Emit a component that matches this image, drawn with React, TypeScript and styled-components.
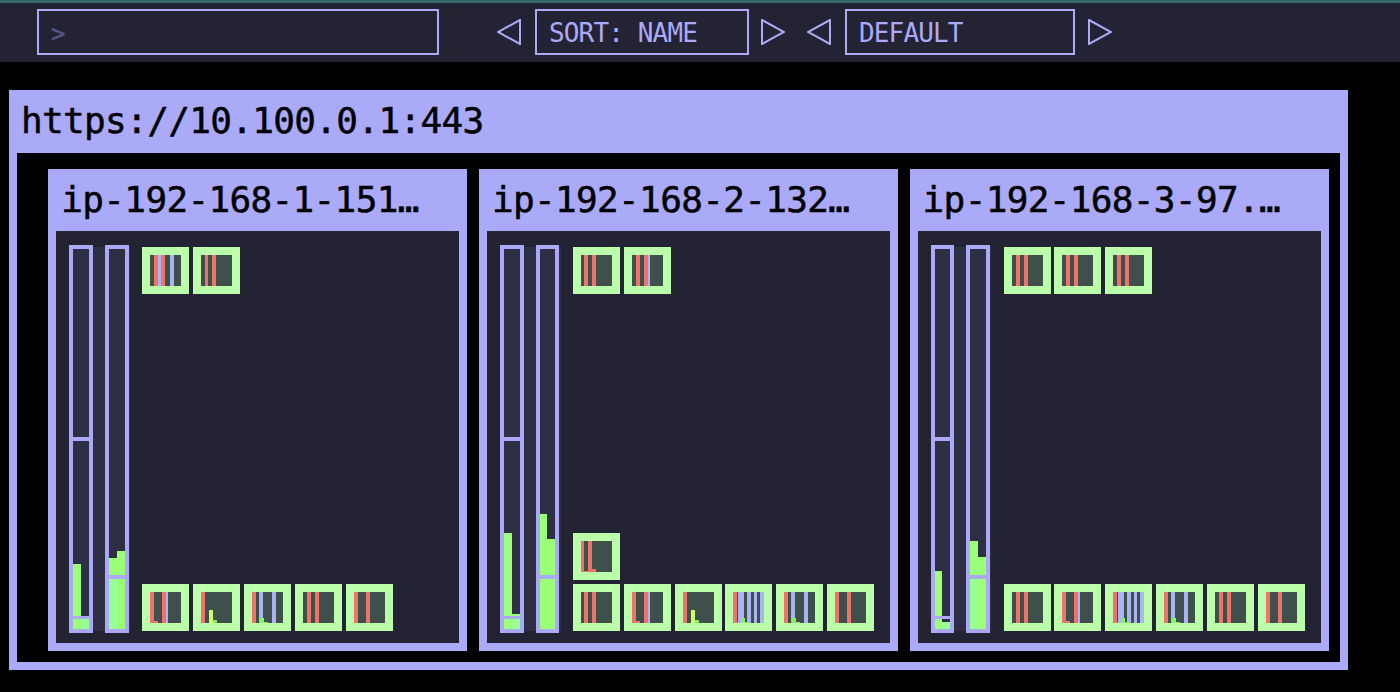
import React from "react";
import styled, { createGlobalStyle } from "styled-components";

const PRIMARY = "#aaaaf9";
const DARK = "#232334";
const RED = "#f0736a";
const BLUE = "#aab4ee";
const GREEN = "#88f066";
const LIME = "#ccff66";
const FILL = "#9bff77";
const MINT = "#97ff94";

const GlobalStyle = createGlobalStyle`
    html, body {
        margin: 0;
        background: #000000;
        font-family: "DejaVu Sans Mono", "Liberation Mono", monospace;
    }
`;

const TopStrip = styled.div`
    height: 3px;
    background: #36696b;
    border-bottom: 1px solid #1c2a30;
`;

const Toolbar = styled.div`
    height: 58px;
    box-sizing: border-box;
    padding: 5px 0 0 37px;
    background: ${DARK};
    display: flex;
    align-items: flex-start;
`;

const Box = styled.div<{ $width: number }>`
    width: ${props => props.$width}px;
    height: 46px;
    box-sizing: border-box;
    border: 2px solid ${PRIMARY};
    padding-left: 12px;
    color: ${PRIMARY};
    font-size: 26px;
    letter-spacing: -0.85px;
    line-height: 44px;
    white-space: nowrap;
`;

const SearchPrompt = styled.span`
    color: #565688;
    font-size: 24px;
    letter-spacing: 0;
    -webkit-text-stroke: 0.4px #565688;
`;

const ArrowButton = styled.svg<{ $before: number; $after: number }>`
    width: 24px;
    height: 26px;
    margin: 10px ${props => props.$after}px 0 ${props => props.$before}px;
    flex: none;
`;

const Panel = styled.div`
    width: 1339px;
    box-sizing: border-box;
    margin: 28px 0 0 9px;
    border: 8px solid ${PRIMARY};
    border-top: none;
    background: #000000;
`;

const PanelTitle = styled.div`
    height: 63px;
    margin: 0 -8px;
    padding-left: 12px;
    background: ${PRIMARY};
    color: #000000;
    font-size: 36px;
    letter-spacing: -0.65px;
    -webkit-text-stroke: 0.5px #000000;
    line-height: 61px;
    white-space: nowrap;
`;

const NodeRow = styled.div`
    display: flex;
    gap: 11.65px;
    padding: 16px 0 11px 31.3px;
`;

const NodeCard = styled.div`
    width: 419px;
    height: 482px;
    box-sizing: border-box;
    flex: none;
    border: 8px solid ${PRIMARY};
    border-top: none;
    background: ${DARK};
    display: flex;
    flex-direction: column;
`;

const NodeTitle = styled.div`
    height: 62px;
    margin: 0 -8px;
    padding-left: 13px;
    background: ${PRIMARY};
    color: #000000;
    font-size: 36px;
    letter-spacing: -0.65px;
    -webkit-text-stroke: 0.5px #000000;
    line-height: 61px;
    white-space: nowrap;
`;

const NodeBody = styled.div`
    flex: 1;
    min-height: 0;
    display: flex;
    padding: 16px 12px 12px 13px;
`;

const Meters = styled.div`
    width: 60.7px;
    flex: none;
    display: flex;
    gap: 12.1px;
    background: #2e2e45;
`;

const MeterBar = styled.div`
    width: 23.6px;
    height: 388px;
    box-sizing: border-box;
    margin: -2px 0;
    border: 4px solid ${PRIMARY};
    background: #2e2e45;
    display: flex;
    flex-direction: column;
    flex: none;
`;

const MeterSection = styled.div<{ $height: number }>`
    height: ${props => props.$height}px;
    flex: none;
    display: flex;
    align-items: flex-end;
`;

const MeterFill = styled.div<{ $height: number; $color: string }>`
    flex: 1;
    height: ${props => props.$height}px;
    background: ${props => props.$color};
`;

const MeterLine = styled.div<{ $height: number }>`
    height: ${props => props.$height}px;
    flex: none;
    background: ${PRIMARY};
`;

const PodArea = styled.div`
    flex: 1;
    margin-left: 12.4px;
    display: flex;
    flex-direction: column;
    justify-content: space-between;
`;

const PodStack = styled.div`
    display: flex;
    flex-direction: column;
    gap: 3.8px;
`;

const PodRow = styled.div`
    display: flex;
    gap: 3.8px;
`;

const PodBox = styled.div`
    width: 47px;
    height: 47px;
    box-sizing: border-box;
    flex: none;
    border: 8px solid #bbffaa;
    background: #3f4f4b;
`;

const PodGraph = styled.svg`
    display: block;
    width: 31px;
    height: 31px;
`;

type Mark = [number, number, number, number, string];

const stripe = (x: number, w: number, color: string): Mark => [x, 0, w, 31, color];

const pods: Record<string, Mark[]> = {
    mid: [stripe(4, 4, RED), stripe(12, 4, RED)],
    midLow: [stripe(3, 4, RED), stripe(11, 4, RED)],
    twoRed: [stripe(0, 4, RED), stripe(12, 4, RED)],
    blueTop: [stripe(4, 4, RED), stripe(8, 3, BLUE), stripe(11, 4, RED), stripe(20, 4, BLUE)],
    midNarrow: [stripe(4, 3, RED), stripe(11, 4, RED)],
    midBlue: [stripe(4, 4, RED), stripe(12, 4, RED), stripe(16, 2, BLUE)],
    step: [stripe(0, 3, RED), stripe(7, 4, RED), [3, 30, 4, 1, RED], [11, 28, 4, 3, RED]],
    redBlue: [stripe(0, 4, RED), [4, 29, 4, 2, RED], stripe(12, 4, RED), stripe(16, 2, BLUE)],
    lime: [stripe(0, 4, RED), [8, 18, 4, 13, LIME], [12, 28, 4, 3, GREEN]],
    blueGreen: [stripe(0, 4, RED), stripe(7, 4, BLUE), stripe(20, 4, BLUE), [8, 26, 4, 5, GREEN], [12, 30, 4, 1, GREEN]],
    busy: [
        stripe(0, 4, RED),
        [4, 30, 4, 1, RED],
        stripe(5, 6, BLUE),
        stripe(14, 4, BLUE),
        stripe(21, 3, BLUE),
        stripe(27, 4, BLUE),
        [8, 26, 4, 5, GREEN],
        [12, 30, 4, 1, GREEN],
    ],
};

type Meter = { sections: { height: number; left: number; right: number; leftColor?: string; rightColor?: string }[]; lines: number[] };

const nodes: { title: string; meters: Meter[]; top: string[]; raised: string[]; bottom: string[] }[] = [
    {
        title: "ip-192-168-1-151…",
        meters: [
            {
                sections: [
                    { height: 188, left: 0, right: 0 },
                    { height: 175, left: 52, right: 0 },
                    { height: 10, left: 10, right: 10, rightColor: MINT },
                ],
                lines: [4, 3],
            },
            {
                sections: [
                    { height: 326, left: 17, right: 24 },
                    { height: 50, left: 50, right: 50, leftColor: MINT },
                ],
                lines: [4],
            },
        ],
        top: ["blueTop", "midNarrow"],
        raised: [],
        bottom: ["redBlue", "lime", "blueGreen", "mid", "twoRed"],
    },
    {
        title: "ip-192-168-2-132…",
        meters: [
            {
                sections: [
                    { height: 188, left: 0, right: 0 },
                    { height: 175, left: 83, right: 2 },
                    { height: 10, left: 10, right: 10, rightColor: MINT },
                ],
                lines: [4, 3],
            },
            {
                sections: [
                    { height: 326, left: 61, right: 36 },
                    { height: 50, left: 50, right: 50 },
                ],
                lines: [4],
            },
        ],
        top: ["midLow", "midBlue"],
        raised: ["step"],
        bottom: ["midLow", "redBlue", "lime", "busy", "blueGreen", "twoRed"],
    },
    {
        title: "ip-192-168-3-97.…",
        meters: [
            {
                sections: [
                    { height: 188, left: 0, right: 0 },
                    { height: 175, left: 45, right: 0 },
                    { height: 10, left: 10, right: 7, rightColor: MINT },
                ],
                lines: [4, 3],
            },
            {
                sections: [
                    { height: 326, left: 34, right: 18 },
                    { height: 50, left: 50, right: 50, leftColor: MINT },
                ],
                lines: [4],
            },
        ],
        top: ["mid", "mid", "mid"],
        raised: [],
        bottom: ["mid", "redBlue", "busy", "blueGreen", "mid", "twoRed"],
    },
];

const Arrow = ({ right, before, after }: { right?: boolean; before: number; after: number }) => (
    <ArrowButton $before={before} $after={after} viewBox="0 0 24 26">
        <polygon
            points={right ? "1,1 23,13 1,25" : "23,1 1,13 23,25"}
            fill="none"
            stroke={PRIMARY}
            strokeWidth="2"
        />
    </ArrowButton>
);

const Pod = ({ kind }: { kind: string }) => (
    <PodBox>
        <PodGraph viewBox="0 0 31 31" shapeRendering="crispEdges">
            {pods[kind].map(([x, y, w, h, color], i) => (
                <rect key={i} x={x} y={y} width={w} height={h} fill={color} />
            ))}
        </PodGraph>
    </PodBox>
);

const App = () => (
    <>
        <GlobalStyle />
        <TopStrip />
        <Toolbar>
            <Box $width={402}>
                <SearchPrompt>&gt;</SearchPrompt>
            </Box>
            <Arrow before={58} after={14} />
            <Box $width={214}>SORT: NAME</Box>
            <Arrow right before={12} after={0} />
            <Arrow before={22} after={14} />
            <Box $width={230}>DEFAULT</Box>
            <Arrow right before={13} after={0} />
        </Toolbar>
        <Panel>
            <PanelTitle>https://10.100.0.1:443</PanelTitle>
            <NodeRow>
                {nodes.map(node => (
                    <NodeCard key={node.title}>
                        <NodeTitle>{node.title}</NodeTitle>
                        <NodeBody>
                            <Meters>
                                {node.meters.map((meter, m) => (
                                    <MeterBar key={m}>
                                        {meter.sections.map((section, s) => (
                                            <React.Fragment key={s}>
                                                <MeterSection $height={section.height}>
                                                    <MeterFill $height={section.left} $color={section.leftColor || FILL} />
                                                    <MeterFill $height={section.right} $color={section.rightColor || FILL} />
                                                </MeterSection>
                                                {s < meter.lines.length && <MeterLine $height={meter.lines[s]} />}
                                            </React.Fragment>
                                        ))}
                                    </MeterBar>
                                ))}
                            </Meters>
                            <PodArea>
                                <PodRow>
                                    {node.top.map((kind, i) => <Pod key={i} kind={kind} />)}
                                </PodRow>
                                <PodStack>
                                    {node.raised.length > 0 && (
                                        <PodRow>
                                            {node.raised.map((kind, i) => <Pod key={i} kind={kind} />)}
                                        </PodRow>
                                    )}
                                    <PodRow>
                                        {node.bottom.map((kind, i) => <Pod key={i} kind={kind} />)}
                                    </PodRow>
                                </PodStack>
                            </PodArea>
                        </NodeBody>
                    </NodeCard>
                ))}
            </NodeRow>
        </Panel>
    </>
);

export default App;
